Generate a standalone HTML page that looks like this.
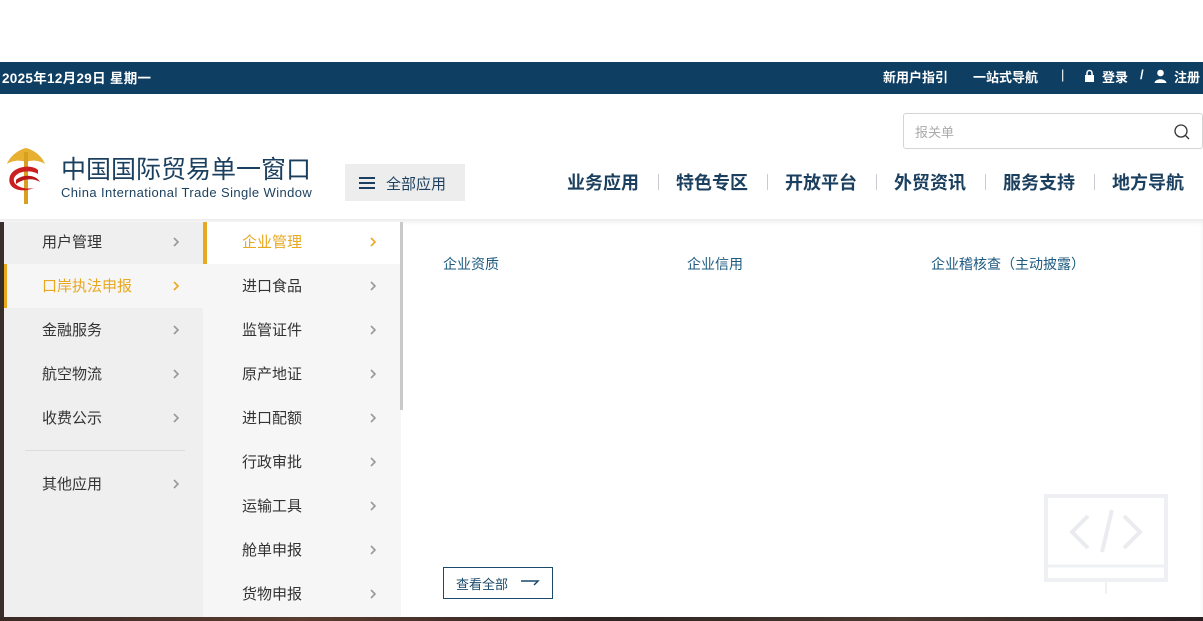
<!DOCTYPE html>
<html><head><meta charset="utf-8"><style>
*{margin:0;padding:0;box-sizing:border-box}
body{width:1203px;height:621px;overflow:hidden;background:#fff;font-family:"Liberation Sans","Noto Sans CJK SC",sans-serif;position:relative}
.bar{position:absolute;top:62px;left:0;width:1203px;height:32px;background:#0f3e63;color:#fff;font-size:13px;font-weight:bold}
.bar span{position:absolute;top:5px}
.hdr{position:absolute;top:94px;left:0;width:1203px;height:125px;background:#fff}
.nav{position:absolute;top:169px;font-size:18px;font-weight:bold;color:#1b3f5e}
.sep{position:absolute;top:174px;width:1px;height:16px;background:#c8ccd0}
.menu{position:absolute;top:219px;left:0;width:1203px;height:398px;background:#fff;box-shadow:inset 0 3px 4px rgba(0,0,0,.08)}
.c1{position:absolute;left:4px;top:222px;width:199px;height:395px;background:#efefef}
.c2{position:absolute;left:203px;top:222px;width:198px;height:395px;background:#f6f6f6}
.it{position:absolute;font-size:15px;color:#333}
.ar{position:absolute;width:8px;height:12px}
.bot{position:absolute;left:0;top:617px;width:1203px;height:4px;background:linear-gradient(90deg,#3a2a26,#5a3c30,#2e2422,#4a3a30,#2a2020)}
.l3{position:absolute;font-size:14px;color:#1d5a80;top:254px}
</style></head><body>
<svg width="0" height="0" style="position:absolute"><defs><symbol id="ch" viewBox="0 0 8 12"><path d="M2 2 L6 6 L2 10" fill="none" stroke="currentColor" stroke-width="1.6"/></symbol></defs></svg>
<div class="bar"><span style="left:2px;letter-spacing:.3px;font-size:13.5px">2025年12月29日 星期一</span>
<span style="left:883px">新用户指引</span><span style="left:973px">一站式导航</span><span style="left:1061px;font-weight:normal">|</span>
<svg style="position:absolute;left:1084px;top:7px" width="11" height="14"><rect x="1" y="6" width="9" height="7" fill="#fff"/><path d="M3 6 V4 a2.5 2.5 0 0 1 5 0 V6" fill="none" stroke="#fff" stroke-width="1.6"/></svg>
<span style="left:1102px">登录</span><span style="left:1140px">/</span>
<svg style="position:absolute;left:1154px;top:7px" width="13" height="14"><circle cx="6.5" cy="4" r="3.3" fill="#fff"/><path d="M0.5 14 C1 9 12 9 12.5 14Z" fill="#fff"/></svg>
<span style="left:1174px">注册</span></div>
<div class="hdr"></div>
<svg style="position:absolute;left:4px;top:144px" width="44" height="62" viewBox="0 0 44 62">
<path d="M22 4 C14 6 6 12 3 20 C10 16 16 16 22 18 C28 16 34 16 41 20 C38 12 30 6 22 4Z" fill="#e8b030"/>
<rect x="20" y="8" width="4" height="52" fill="#d8a020"/>
<path d="M34 26 C28 20 10 22 6 32 C2 44 16 50 30 44 C20 46 8 42 10 34 C14 26 28 26 34 30Z" fill="#cc2020"/>
<path d="M12 36 C18 30 32 30 36 38 C30 34 20 34 12 40Z" fill="#b81a1a"/></svg>
<div style="position:absolute;left:61px;top:150px;font-size:25px;color:#1b3f5e;letter-spacing:0">中国国际贸易单一窗口</div>
<div style="position:absolute;left:61px;top:185px;font-size:13px;color:#1b3f5e;letter-spacing:.4px">China International Trade Single Window</div>
<div style="position:absolute;left:345px;top:164px;width:120px;height:37px;background:#ededed"></div>
<div style="position:absolute;left:359px;top:177px;width:16px;height:2px;background:#1b3f5e;box-shadow:0 5px 0 #1b3f5e,0 10px 0 #1b3f5e"></div>
<div style="position:absolute;left:386px;top:173px;font-size:15px;color:#1b3f5e">全部应用</div>
<div style="position:absolute;left:903px;top:113px;width:300px;height:36px;border:1px solid #d4d4d4;border-radius:3px"></div>
<div style="position:absolute;left:915px;top:122px;font-size:13px;color:#aaa">报关单</div>
<svg style="position:absolute;left:1173px;top:123px" width="18" height="18"><circle cx="8" cy="8" r="6" fill="none" stroke="#333" stroke-width="1.3"/><line x1="12.5" y1="12.5" x2="16" y2="16" stroke="#333" stroke-width="1.3"/></svg>
<div class="nav" style="left:567px">业务应用</div><div class="sep" style="left:658px"></div>
<div class="nav" style="left:676px">特色专区</div><div class="sep" style="left:767px"></div>
<div class="nav" style="left:785px">开放平台</div><div class="sep" style="left:876px"></div>
<div class="nav" style="left:894px">外贸资讯</div><div class="sep" style="left:985px"></div>
<div class="nav" style="left:1003px">服务支持</div><div class="sep" style="left:1094px"></div>
<div class="nav" style="left:1112px">地方导航</div>
<div class="menu"></div>
<div style="position:absolute;left:0;top:222px;width:4px;height:395px;background:#3a2e2a"></div>
<div class="c1"></div><div class="c2"></div>
<div style="position:absolute;left:4px;top:264px;width:199px;height:44px;background:#f6f6f6"></div>
<div style="position:absolute;left:4px;top:264px;width:3px;height:44px;background:#e8a820"></div>
<div style="position:absolute;left:203px;top:222px;width:197px;height:42px;background:#fff"></div>
<div style="position:absolute;left:203px;top:222px;width:4px;height:42px;background:#e8a820"></div>
<div style="position:absolute;left:400px;top:222px;width:3px;height:188px;background:#c9c9c9"></div>
<div style="position:absolute;left:25px;top:450px;width:160px;height:1px;background:#ddd"></div>
<div class="it" style="left:42px;top:231px">用户管理</div><svg class="ar" style="left:172px;top:236px;color:#999"><use href="#ch"/></svg>
<div class="it" style="left:42px;top:275px;color:#e8a820">口岸执法申报</div><svg class="ar" style="left:172px;top:280px;color:#e8a820"><use href="#ch"/></svg>
<div class="it" style="left:42px;top:319px">金融服务</div><svg class="ar" style="left:172px;top:324px;color:#999"><use href="#ch"/></svg>
<div class="it" style="left:42px;top:363px">航空物流</div><svg class="ar" style="left:172px;top:368px;color:#999"><use href="#ch"/></svg>
<div class="it" style="left:42px;top:407px">收费公示</div><svg class="ar" style="left:172px;top:412px;color:#999"><use href="#ch"/></svg>
<div class="it" style="left:42px;top:473px">其他应用</div><svg class="ar" style="left:172px;top:478px;color:#999"><use href="#ch"/></svg>
<div class="it" style="left:242px;top:231px;color:#e8a820">企业管理</div><svg class="ar" style="left:369px;top:236px;color:#e8a820"><use href="#ch"/></svg>
<div class="it" style="left:242px;top:275px">进口食品</div><svg class="ar" style="left:369px;top:280px;color:#999"><use href="#ch"/></svg>
<div class="it" style="left:242px;top:319px">监管证件</div><svg class="ar" style="left:369px;top:324px;color:#999"><use href="#ch"/></svg>
<div class="it" style="left:242px;top:363px">原产地证</div><svg class="ar" style="left:369px;top:368px;color:#999"><use href="#ch"/></svg>
<div class="it" style="left:242px;top:407px">进口配额</div><svg class="ar" style="left:369px;top:412px;color:#999"><use href="#ch"/></svg>
<div class="it" style="left:242px;top:451px">行政审批</div><svg class="ar" style="left:369px;top:456px;color:#999"><use href="#ch"/></svg>
<div class="it" style="left:242px;top:495px">运输工具</div><svg class="ar" style="left:369px;top:500px;color:#999"><use href="#ch"/></svg>
<div class="it" style="left:242px;top:539px">舱单申报</div><svg class="ar" style="left:369px;top:544px;color:#999"><use href="#ch"/></svg>
<div class="it" style="left:242px;top:583px">货物申报</div><svg class="ar" style="left:369px;top:588px;color:#999"><use href="#ch"/></svg>
<div class="l3" style="left:443px">企业资质</div>
<div class="l3" style="left:687px">企业信用</div>
<div class="l3" style="left:931px">企业稽核查（主动披露）</div>
<div style="position:absolute;left:443px;top:567px;width:110px;height:32px;border:1px solid #1b4a6b;font-size:13px;color:#1b4a6b;padding:6px 0 0 12px">查看全部</div>
<svg style="position:absolute;left:520px;top:577px" width="20" height="10"><path d="M1 4 H18 L14 8" fill="none" stroke="#1b4a6b" stroke-width="1.5"/></svg>
<svg style="position:absolute;left:1044px;top:494px" width="126" height="100"><rect x="2" y="2" width="120" height="84" fill="none" stroke="#eef0f3" stroke-width="4"/><line x1="2" y1="72" x2="122" y2="72" stroke="#eef0f3" stroke-width="3"/><path d="M44 22 L28 38 L44 54 M80 22 L96 38 L80 54 M68 16 L58 58" fill="none" stroke="#eaecef" stroke-width="4"/><line x1="62" y1="86" x2="62" y2="100" stroke="#f0f1f3" stroke-width="2"/></svg>
<div class="bot"></div>
</body></html>
